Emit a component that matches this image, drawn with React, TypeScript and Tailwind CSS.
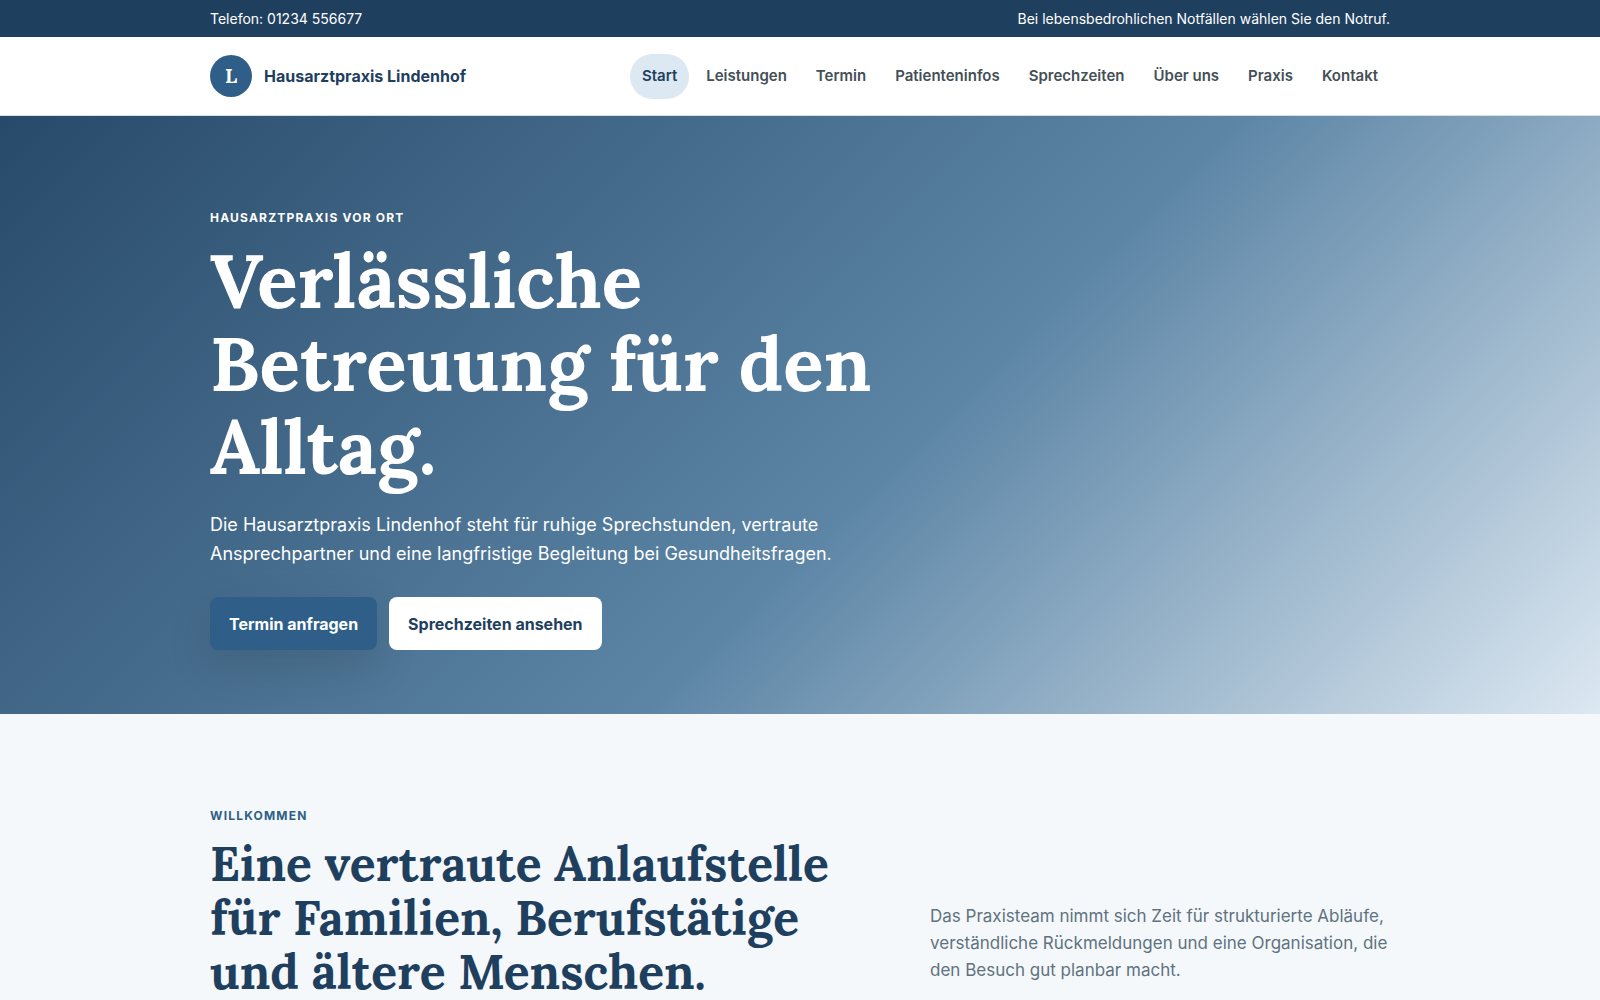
const nav = ["Start", "Leistungen", "Termin", "Patienteninfos", "Sprechzeiten", "Über uns", "Praxis", "Kontakt"];
const wrap = "mx-auto w-full max-w-[1180px]";

export default function App() {
  return (
    <div className="min-h-screen bg-[#f4f8fb] font-['Inter',sans-serif] text-base text-[#24343d]">
      <div className="bg-[#1f3f5f] text-sm text-white">
        <div className={`${wrap} flex items-center justify-between py-2 leading-[21px]`}>
          <span>Telefon: 01234 556677</span>
          <span>Bei lebensbedrohlichen Notfällen wählen Sie den Notruf.</span>
        </div>
      </div>
      <header className="border-b border-[#d5e0e8] bg-white">
        <div className={`${wrap} flex min-h-[78px] items-center justify-between`}>
          <a href="#start" className="flex items-center gap-3 font-bold text-[#1f3f5f]">
            <span className="grid size-[42px] place-items-center rounded-full bg-[#2f5f88] font-['Lora','Liberation_Serif',serif] text-xl font-bold text-white">L</span>
            Hausarztpraxis Lindenhof
          </a>
          <nav className="flex gap-[5px] text-[15px] leading-6 font-semibold">
            {nav.map((n, i) => (
              <a
                key={n}
                href={`#${n}`}
                className={`rounded-full px-3 pt-[10px] pb-[11px] ${i === 0 ? "bg-[#dce8f2] text-[#1f3f5f]" : "text-[#435056]"}`}
              >
                {n}
              </a>
            ))}
          </nav>
        </div>
      </header>
      <main>
        <section className="bg-[linear-gradient(135deg,#284a6a_0%,#5b84a5_56%,#dce8f2_100%)] text-white">
          <div className={`${wrap} pt-[92px] pb-16`}>
            <p className="text-xs leading-5 font-bold tracking-widest uppercase">Hausarztpraxis vor Ort</p>
            <h1 className="mt-3 max-w-[720px] font-['Lora','Liberation_Serif',serif] text-[75px] leading-[83px] font-bold">
              Verlässliche Betreuung für den Alltag.
            </h1>
            <p className="mt-[21px] max-w-[660px] text-lg leading-[29px]">
              Die Hausarztpraxis Lindenhof steht für ruhige Sprechstunden, vertraute Ansprechpartner und eine langfristige Begleitung bei Gesundheitsfragen.
            </p>
            <div className="mt-[29px] flex gap-3">
              <button type="button" className="h-[53px] rounded-lg bg-[#2f5f88] px-[19px] font-bold text-white shadow-[0_16px_40px_rgba(36,52,61,0.2)]">
                Termin anfragen
              </button>
              <button type="button" className="h-[53px] rounded-lg bg-white px-[19px] font-bold text-[#1f3f5f]">
                Sprechzeiten ansehen
              </button>
            </div>
          </div>
        </section>
        <section className={`${wrap} grid grid-cols-[3fr_2fr] items-end gap-[30px] pt-[92px]`}>
          <div>
            <p className="text-xs leading-5 font-bold tracking-widest text-[#2f5f88] uppercase">Willkommen</p>
            <h2 className="mt-[11px] font-['Lora','Liberation_Serif',serif] text-[48px] leading-[54px] font-bold text-[#1f3f5f]">
              Eine vertraute Anlaufstelle für Familien, Berufstätige und ältere Menschen.
            </h2>
          </div>
          <p className="mb-[15px] text-[17px] leading-[27px] text-[#60727f]">
            Das Praxisteam nimmt sich Zeit für strukturierte Abläufe, verständliche Rückmeldungen und eine Organisation, die den Besuch gut planbar macht.
          </p>
        </section>
      </main>
    </div>
  );
}
